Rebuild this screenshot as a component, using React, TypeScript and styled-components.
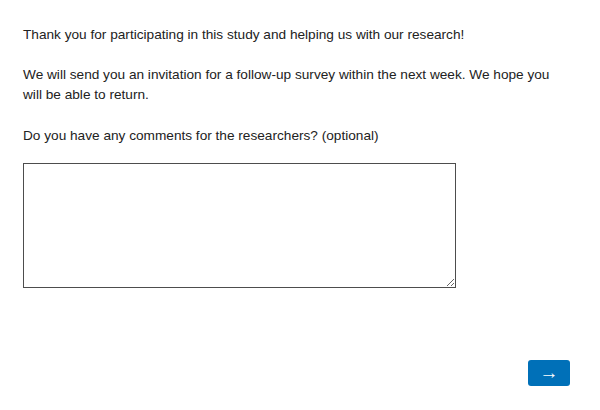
import React from "react";
import styled, { createGlobalStyle } from "styled-components";

const Global = createGlobalStyle`
  html, body { margin: 0; padding: 0; background: #fff; }
  body { font-family: "Liberation Sans", Arial, Helvetica, sans-serif; }
`;

const Page = styled.div`
  width: 600px;
  height: 410px;
  box-sizing: border-box;
  padding: 25px 30px 0 23px;
  display: flex;
  flex-direction: column;
  color: #222;
  font-size: 13.65px;
  line-height: 20px;
`;

const Para = styled.p`
  margin: 0 0 20px 0;
  max-width: 545px;
`;

const Question = styled.label`
  display: block;
  margin: 1px 0 17px 0;
`;

const Comments = styled.textarea`
  width: 433px;
  height: 125px;
  box-sizing: border-box;
  border: 1px solid #4d4d4d;
  border-radius: 0;
  padding: 4px;
  font-family: inherit;
  font-size: 14px;
  resize: both;
  margin: 0;
`;

const Footer = styled.div`
  display: flex;
  justify-content: flex-end;
  margin-top: 72px;
`;

const NextButton = styled.button`
  width: 42px;
  height: 26px;
  border: none;
  border-radius: 3px;
  background: #0070b8;
  color: #fff;
  font-family: "Liberation Sans", sans-serif;
  font-size: 19px;
  line-height: 26px;
  padding: 0 0 2px 0;
  cursor: pointer;
`;

export default function App() {
  return (
    <>
      <Global />
      <Page>
        <Para>Thank you for participating in this study and helping us with our research!</Para>
        <Para>
          We will send you an invitation for a follow-up survey within the next week. We hope you
          will be able to return.
        </Para>
        <Question htmlFor="comments">Do you have any comments for the researchers? (optional)</Question>
        <Comments id="comments" />
        <Footer>
          <NextButton>→</NextButton>
        </Footer>
      </Page>
    </>
  );
}
